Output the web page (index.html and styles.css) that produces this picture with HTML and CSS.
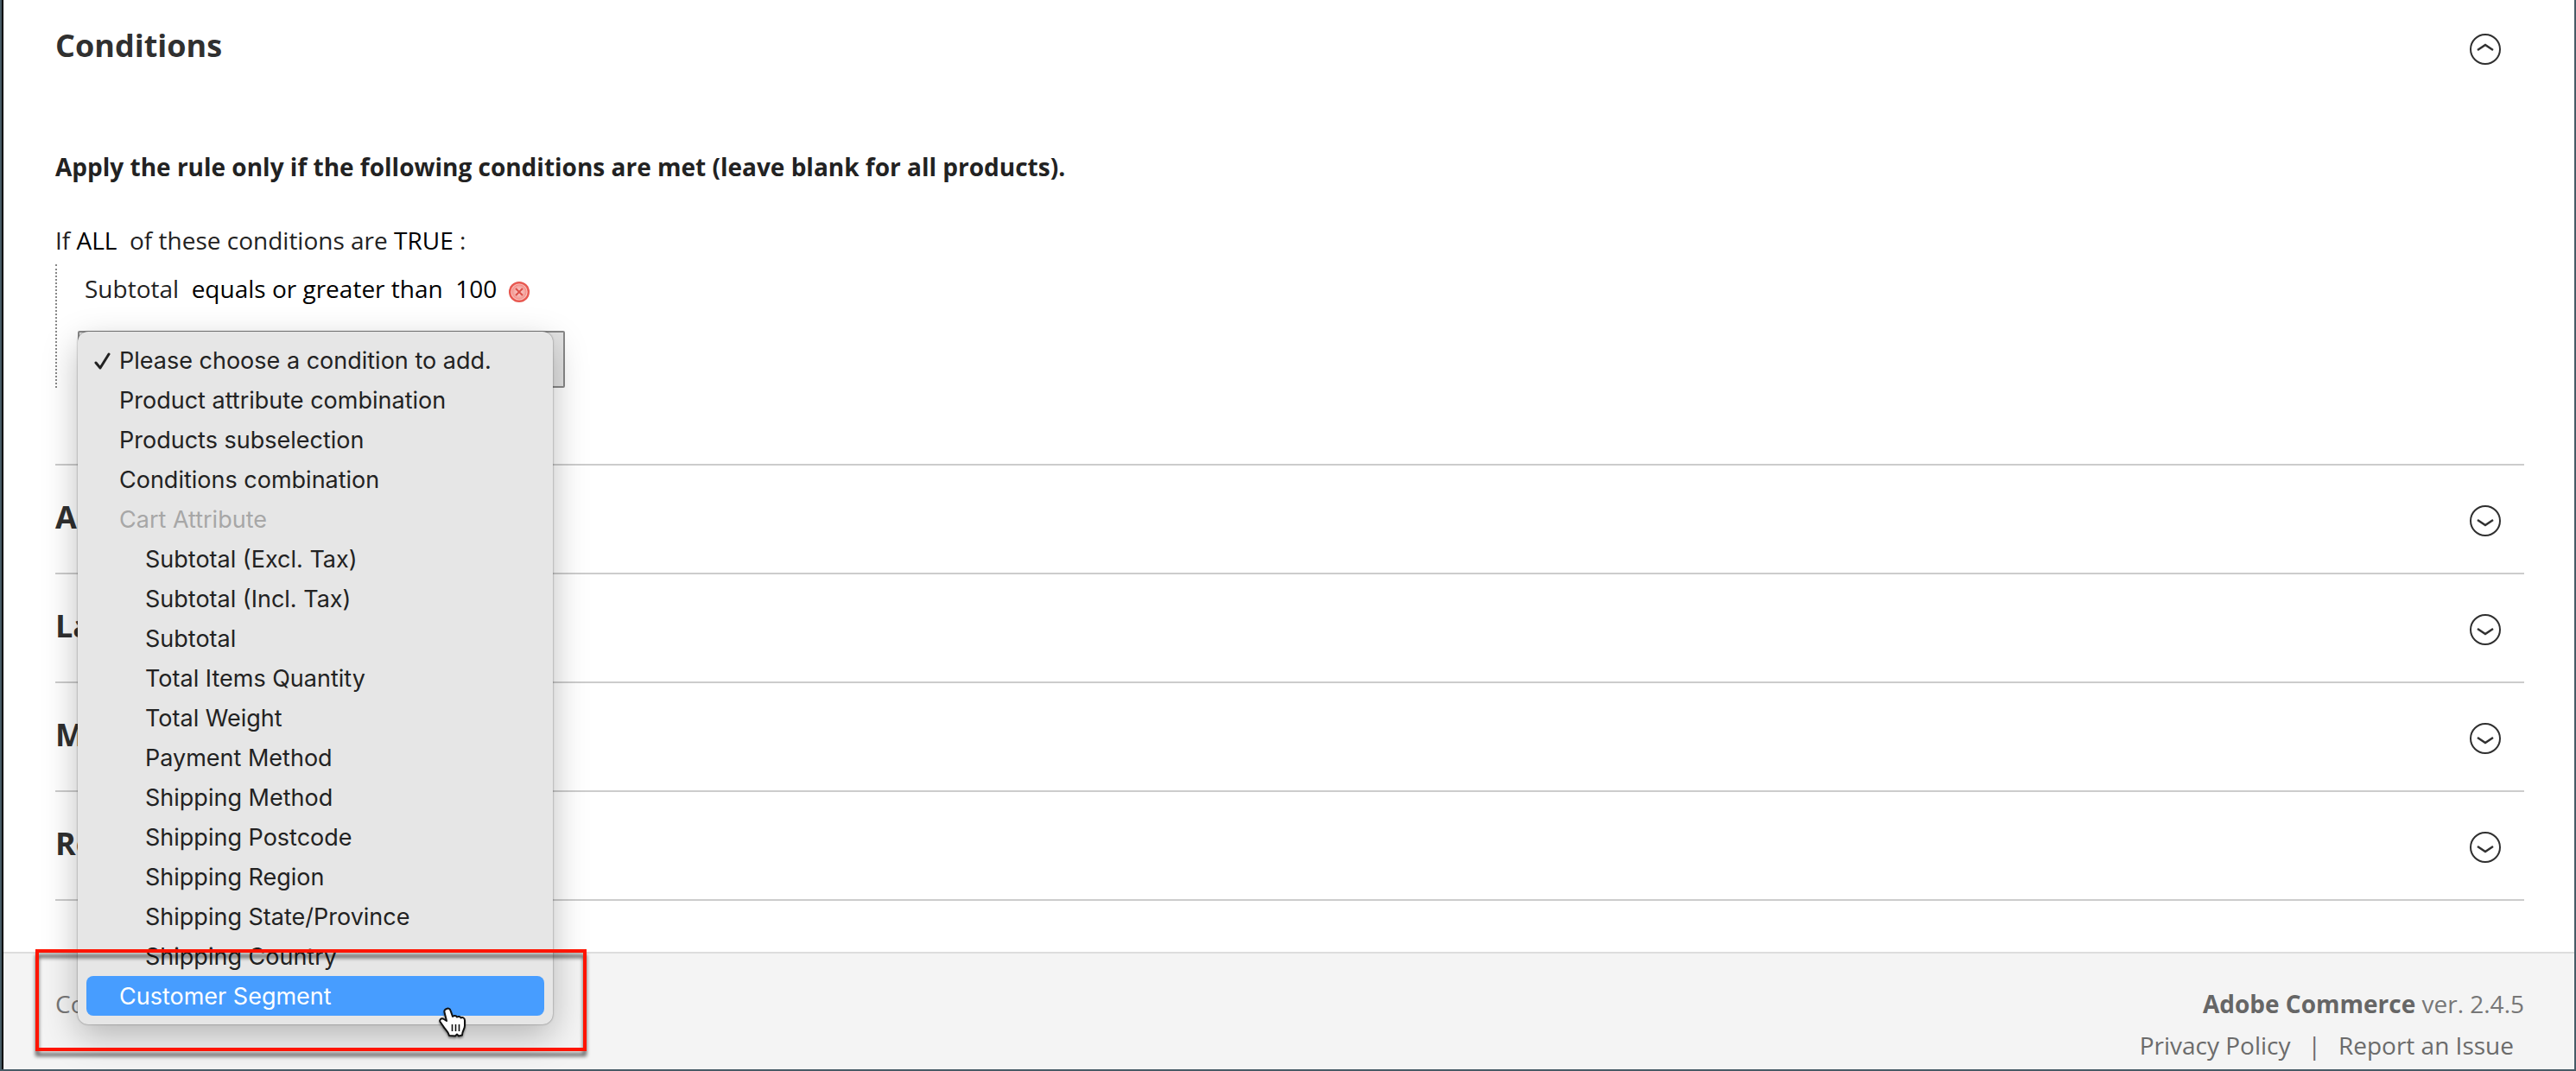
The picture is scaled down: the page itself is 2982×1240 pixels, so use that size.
FILE: index.html
```html
<!DOCTYPE html>
<html lang="en">
<head>
<meta charset="utf-8">
<title>Cart Price Rule</title>
<link rel="stylesheet" href="styles.css">
</head>
<body>
<svg class="sprite" aria-hidden="true">
  <symbol id="chevron" viewBox="0 0 38 38">
    <circle cx="19" cy="19" r="17" fill="none" stroke="#303030" stroke-width="2"/>
    <path d="M10 18l9 6 9-6" fill="none" stroke="#303030" stroke-width="2.4"/>
  </symbol>
</svg>
<main class="content">
  <section class="conditions">
    <div class="section-head">
      <h2>Conditions</h2>
      <button class="toggle open" type="button" aria-label="Collapse Conditions"><svg><use href="#chevron"/></svg></button>
    </div>
    <h3 class="legend">Apply the rule only if the following conditions are met (leave blank for all products).</h3>
    <p class="rule-line">If <a href="#">ALL</a>&nbsp; of these conditions are <a href="#">TRUE</a> :</p>
    <div class="rule-children">
      <p class="rule-child">Subtotal&nbsp; <a href="#">equals or greater than</a>&nbsp; <a href="#">100</a>
        <button class="remove" type="button" aria-label="Remove">
          <svg viewBox="0 0 24 24">
            <defs><radialGradient id="red" cx=".5" cy=".5" r=".5"><stop offset="0" stop-color="#fbd5d2"/><stop offset=".6" stop-color="#f4a09a"/><stop offset=".8" stop-color="#ec6a62"/><stop offset="1" stop-color="#e4473f"/></radialGradient></defs>
            <circle cx="12" cy="12" r="12" fill="url(#red)"/>
            <circle cx="12" cy="12" r="9" fill="none" stroke="#f9c0bc" stroke-width="1.2"/>
            <path d="M8 8l8 8M16 8l-8 8" stroke="#dc4f48" stroke-width="2"/>
          </svg>
        </button>
      </p>
      <div class="picker">
        <select class="picker-select" aria-label="Condition to add"><option>Please choose a condition to add.</option></select>
        <ul class="menu" role="listbox" aria-label="Conditions to add">
          <li role="option" aria-selected="true"><svg class="check" viewBox="0 0 20 26"><path d="M2 15l5 6L17 5" fill="none" stroke="#222" stroke-width="3" stroke-linecap="round" stroke-linejoin="round"/></svg>Please choose a condition to add.</li>
          <li role="option">Product attribute combination</li>
          <li role="option">Products subselection</li>
          <li role="option">Conditions combination</li>
          <li class="group">Cart Attribute</li>
          <li class="sub" role="option">Subtotal (Excl. Tax)</li>
          <li class="sub" role="option">Subtotal (Incl. Tax)</li>
          <li class="sub" role="option">Subtotal</li>
          <li class="sub" role="option">Total Items Quantity</li>
          <li class="sub" role="option">Total Weight</li>
          <li class="sub" role="option">Payment Method</li>
          <li class="sub" role="option">Shipping Method</li>
          <li class="sub" role="option">Shipping Postcode</li>
          <li class="sub" role="option">Shipping Region</li>
          <li class="sub" role="option">Shipping State/Province</li>
          <li class="sub" role="option">Shipping Country</li>
          <li class="active" role="option">Customer Segment</li>
        </ul>
        <div class="highlight"></div>
        <svg class="pointer" viewBox="0 0 32 36">
          <path d="M9 2c2-1 4 0 4.500 2l2.500 7c1-1.500 4-1.500 5 .500 1.500-1 4-.500 4.500 1 2-1 4.500 0 4.500 3v6c0 4-3 6-3 11l-4 1-2-2-2 2-7-.500c-1-5-5-7-7-11l-3.500-5c-1-2 1-4.500 3.500-3.500l4 2.500L6.500 6C6 4 7 2.500 9 2z" fill="#fff" stroke="#111" stroke-width="2" stroke-linejoin="round"/>
          <path d="M15.500 20v8M19.500 20v8M23.500 20v8" stroke="#111" stroke-width="1.600"/>
        </svg>
      </div>
    </div>
  </section>
  <section class="section-head row"><h2>Actions</h2><button class="toggle" type="button" aria-label="Expand Actions"><svg><use href="#chevron"/></svg></button></section>
  <section class="section-head row"><h2>Labels</h2><button class="toggle" type="button" aria-label="Expand Labels"><svg><use href="#chevron"/></svg></button></section>
  <section class="section-head row"><h2>Manage Coupon Codes</h2><button class="toggle" type="button" aria-label="Expand Manage Coupon Codes"><svg><use href="#chevron"/></svg></button></section>
  <section class="section-head row"><h2>Related Dynamic Blocks</h2><button class="toggle" type="button" aria-label="Expand Related Dynamic Blocks"><svg><use href="#chevron"/></svg></button></section>
</main>
<footer class="footer">
  <p>Copyright</p>
  <div class="legal">
    <p><strong>Adobe Commerce</strong> ver. 2.4.5</p>
    <p class="links"><a href="#">Privacy Policy</a><span>|</span><a href="#">Report an Issue</a></p>
  </div>
</footer>
</body>
</html>
```
FILE: styles.css
```css
* { box-sizing: border-box; }

body {
  margin: 0;
  min-height: 100vh;
  display: flex;
  flex-direction: column;
  border: 2px solid #475b66;
  border-top: 0;
  box-shadow: inset 2px 0 #000;
  font: 28px/48px "Open Sans", sans-serif;
  color: #222;
  background: #fff;
}

h2, h3, p, ul { margin: 0; padding: 0; }
a { color: inherit; text-decoration: none; }
.sprite { position: absolute; width: 0; height: 0; }

.content {
  margin: 0 58px 59px 62px;
  border-bottom: 2px solid #ccc;
}

.conditions { height: 537px; }

.section-head {
  display: flex;
  align-items: center;
  justify-content: space-between;
  height: 110px;
  padding-right: 26px;
}
.section-head h2 {
  padding-bottom: 4px;
  font-size: 36px;
  line-height: 48px;
  font-weight: 700;
  color: #303030;
}
.row {
  height: 126px;
  border-top: 2px solid #ccc;
}

.toggle, .remove {
  padding: 0;
  border: 0;
  background: none;
}
.toggle { width: 38px; height: 38px; margin-top: 3px; }
.toggle svg, .remove svg { display: block; width: 100%; height: 100%; }
.toggle.open svg { transform: rotate(180deg); }

.legend {
  margin-top: 59px;
  font-size: 28px;
  line-height: 48px;
  font-weight: 700;
}
.rule-line { margin-top: 37px; }
.rule-line a, .rule-child a { color: #000; }

.rule-children {
  height: 143px;
  margin-top: 4px;
  padding-left: 32px;
  border-left: 2px dotted #888;
}
.rule-child { padding-top: 4px; }
.remove {
  width: 24px;
  height: 24px;
  margin-left: 6px;
  vertical-align: -5px;
}

.picker { position: relative; margin-top: 25px; margin-left: -8px; width: 564px; }
.picker-select {
  display: block;
  width: 100%;
  height: 66px;
  appearance: none;
  border: 2px solid #888;
  border-radius: 2px;
  background: #e3e3e3;
  font: inherit;
  color: transparent;
}
.menu {
  position: absolute;
  top: 1px;
  left: 0;
  width: 550px;
  padding: 10px;
  list-style: none;
  border-radius: 12px;
  background: #e6e6e6;
  box-shadow: 0 0 2px rgba(0, 0, 0, .5), 0 14px 40px rgba(0, 0, 0, .26);
  font: 27px/44px Inter, sans-serif;
}
.menu li { position: relative; padding-top: 2px; padding-left: 38px; }
.menu .sub { padding-left: 68px; }
.menu .group { color: #a7a7a7; }
.menu .active { border-radius: 8px; background: #479dff; color: #fff; }
.check { position: absolute; left: 9px; top: 11px; width: 20px; height: 26px; }

.highlight {
  position: absolute;
  top: 716px;
  left: -49px;
  width: 638px;
  height: 118px;
  border: 4px solid #ff1400;
  filter: drop-shadow(0 6px 2px rgba(0, 0, 0, .6));
}
.pointer {
  position: absolute;
  top: 783px;
  left: 418px;
  width: 32px;
  height: 36px;
  filter: drop-shadow(0 2px 1px rgba(0, 0, 0, .4));
}

.footer {
  flex: 1;
  display: flex;
  justify-content: space-between;
  margin-left: 2px;
  padding: 34px 58px 0 60px;
  border-top: 2px solid #ddd;
  background: #f4f4f4;
  color: #777;
}
.legal { text-align: right; }
.legal strong { color: #666; }
.links {
  display: flex;
  justify-content: flex-end;
  gap: 20px;
  padding-right: 12px;
  color: #6b6b6b;
}
```
